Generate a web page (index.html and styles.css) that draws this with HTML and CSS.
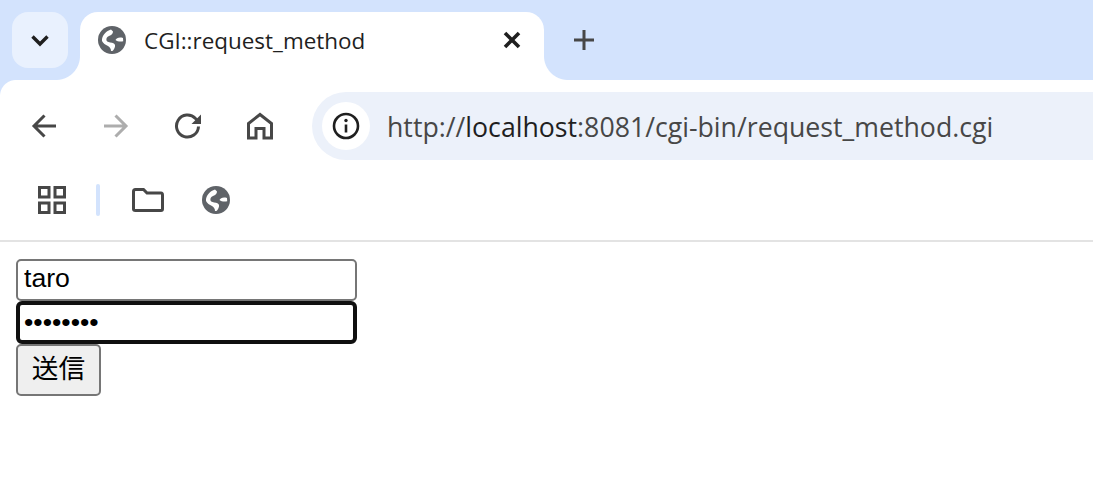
FILE: index.html
```html
<!DOCTYPE html>
<html lang="ja">
<head>
  <meta charset="UTF-8">
  <title>CGI::request_method</title>
  <link rel="stylesheet" href="styles.css">
</head>
<body>
  <div class="tabstrip">
    <div class="tab-search">
      <svg width="28" height="28" viewBox="0 0 28 28"><path class="s-dark s-chevron" d="M6.500 10.500 14 18 21.500 10.500"/></svg>
    </div>
    <div class="tab">
      <svg class="globe" width="28" height="28" viewBox="0 0 28 28"><use href="#globe"/></svg>
      <span class="tab-title">CGI::request_method</span>
      <svg class="tab-close" width="20" height="20" viewBox="0 0 20 20"><path class="s-dark s-close" d="M3 3 17 17M17 3 3 17"/></svg>
    </div>
    <svg class="new-tab" width="24" height="24" viewBox="0 0 24 24"><path class="s-grey" d="M12 2V22M2 12H22"/></svg>
  </div>

  <div class="toolbar">
    <div class="nav-btns">
      <svg width="28" height="28" viewBox="0 0 28 28"><path class="s-grey" d="M26 14H5M14.500 3.500 4 14 14.500 24.500"/></svg>
      <svg width="28" height="28" viewBox="0 0 28 28"><path class="s-off" d="M2 14H23M13.500 3.500 24 14 13.500 24.500"/></svg>
      <svg width="28" height="28" viewBox="0 0 28 28"><path class="s-grey" d="M24.500 14.500A11 11 0 1 1 21.500 6.500L25 10"/><path class="f-grey" d="M27 2.500V12H17.500Z"/></svg>
      <svg width="28" height="28" viewBox="0 0 28 28"><path class="s-grey s-miter" d="M2.500 26V11.500L14 2.500 25.500 11.500V26H18V16.500H10V26Z"/></svg>
    </div>
    <div class="omnibox">
      <div class="site-info">
        <svg width="28" height="28" viewBox="0 0 28 28"><circle class="s-dark s-thin" cx="14" cy="14" r="12"/><path class="s-dark s-thin" d="M14 12.500V20.500"/><circle class="f-dark" cx="14" cy="8.500" r="1.700"/></svg>
      </div>
      <div class="url">http://<span class="host">localhost</span>:8081/cgi-bin/request_method.cgi</div>
    </div>
  </div>

  <div class="bookmarks">
    <svg class="apps" width="28" height="28" viewBox="0 0 28 28"><path class="s-grey s-miter" d="M1.500 1.500H11V11H1.500ZM17 1.500H26.500V11H17ZM1.500 17H11V26.500H1.500ZM17 17H26.500V26.500H17Z"/></svg>
    <div class="bm-sep"></div>
    <svg class="folder" width="32" height="24" viewBox="0 0 32 24"><path class="s-grey" d="M1.500 3.500Q1.500 1.500 3.500 1.500H11.500L15 5H29Q30.500 5 30.500 7V21Q30.500 22.500 29 22.500H3.500Q1.500 22.500 1.500 21Z"/></svg>
    <svg class="globe bm-globe" width="28" height="28" viewBox="0 0 28 28"><use href="#globe"/></svg>
  </div>

  <form class="login">
    <input class="field" type="text" value="taro">
    <input class="field field-focus" type="password" value="password">
    <button class="send" type="button">送信</button>
  </form>

  <svg class="defs" width="0" height="0">
    <symbol id="globe" viewBox="0 0 28 28">
      <circle cx="14" cy="14" r="14" fill="#5f6368"/>
      <path d="M4 13C5 8.500 8 5 13 3.500L15 5.500C15 7.500 13.500 9.500 11 10 9 10.500 8 12.500 8.500 14.500 9 16 11.500 16.500 14 16.800 16 17 17.500 18.500 17 20.500 16.500 22.500 15.500 24 14.500 25L13 25C13 23 12 21 10 20 7.500 19 5 17 4 15Z"/>
      <path d="M17.500 14C18.500 12 21 11 25 12L25.200 15.200C23 15.800 19.500 15.800 17.500 14Z"/>
    </symbol>
  </svg>
</body>
</html>
```

FILE: styles.css
```css
* {
  box-sizing: border-box;
}
body {
  margin: 0;
  background: white;
  font-family: "Open Sans", "Noto Sans", sans-serif;
}
svg {
  display: block;
  flex: none;
}
svg path {
  fill: none;
}
.s-dark {
  stroke: #1f1f1f;
  stroke-width: 4;
}
.s-chevron {
  stroke-width: 3.400;
}
.s-close {
  stroke-width: 3.600;
}
.s-grey {
  stroke: #474747;
  stroke-width: 3;
}
.s-off {
  stroke: #adadad;
  stroke-width: 3;
}
.s-miter {
  stroke-linejoin: miter;
}
.s-thin {
  stroke-width: 2.600;
  fill: none;
}
svg path.f-grey {
  fill: #474747;
}
.f-dark {
  fill: #1f1f1f;
}
#globe path {
  fill: #fff;
}
.defs {
  position: absolute;
}

/* tab strip */
.tabstrip {
  height: 80px;
  background: #d3e3fd;
  display: flex;
  padding: 12px 0 0 12px;
}
.tab-search {
  width: 56px;
  height: 56px;
  border-radius: 16px;
  background: #e9f1fe;
  display: flex;
  align-items: center;
  justify-content: center;
  position: relative;
  z-index: 1;
}
.tab {
  width: 464px;
  height: 68px;
  margin-left: 12px;
  background: white;
  border-radius: 18px 18px 0 0;
  display: flex;
  align-items: center;
  padding: 0 22px 12px 18px;
  position: relative;
}
.tab::before,
.tab::after {
  content: "";
  position: absolute;
  bottom: 0;
  width: 24px;
  height: 24px;
}
.tab::before {
  left: -24px;
  background: radial-gradient(circle at 0 0, #d3e3fd 23.500px, white 24.500px);
}
.tab::after {
  right: -24px;
  background: radial-gradient(circle at 100% 0, #d3e3fd 23.500px, white 24.500px);
}
.tab-title {
  flex: 1;
  margin-left: 18px;
  font-size: 22.450px;
  color: #1f1f1f;
  white-space: nowrap;
}
.new-tab {
  margin: 16px 0 0 28px;
}

/* toolbar */
.toolbar {
  height: 80px;
  background: white;
  display: flex;
  padding-top: 12px;
  position: relative;
}
.toolbar::before {
  content: "";
  position: absolute;
  left: 0;
  top: 0;
  width: 16px;
  height: 16px;
  background: radial-gradient(circle at 100% 100%, white 15.500px, #d3e3fd 16.500px);
}
.nav-btns {
  width: 312px;
  height: 68px;
  display: flex;
  align-items: center;
  gap: 44px;
  padding-left: 30px;
}
.omnibox {
  flex: 1;
  height: 68px;
  background: #ecf1fa;
  border-radius: 34px 0 0 34px;
  display: flex;
  align-items: center;
  padding-left: 10px;
}
.site-info {
  width: 48px;
  height: 48px;
  border-radius: 50%;
  background: white;
  display: flex;
  align-items: center;
  justify-content: center;
}
.url {
  margin-left: 17px;
  font-size: 26.700px;
  color: #474747;
  white-space: nowrap;
}
.host {
  color: #1f1f1f;
}

/* bookmarks bar */
.bookmarks {
  height: 82px;
  border-bottom: 2px solid #e3e3e3;
  display: flex;
  align-items: center;
  padding-left: 38px;
}
.bm-sep {
  width: 4px;
  height: 32px;
  margin-left: 30px;
  border-radius: 2px;
  background: #d3e3fd;
}
.folder {
  margin-left: 32px;
}
.bm-globe {
  margin-left: 38px;
}

/* page */
.login {
  padding: 17px 16px 0;
}
.field {
  display: block;
  width: 341px;
  height: 42px;
  padding: 0 6px 3px;
  border: 2px solid #767676;
  border-radius: 5px;
  background: white;
  font: 26.670px "Liberation Sans", Arial, sans-serif;
  color: black;
  outline: none;
}
.field-focus {
  height: 43px;
  padding: 1px 4px;
  border: 4px solid #101010;
  border-radius: 6px;
}
.send {
  display: block;
  width: 85px;
  height: 52px;
  padding: 0 0 7px;
  border: 2px solid #767676;
  border-radius: 5px;
  background: #efefef;
  font: 26.670px "Liberation Sans", "Noto Sans CJK JP", sans-serif;
  color: black;
}
```
